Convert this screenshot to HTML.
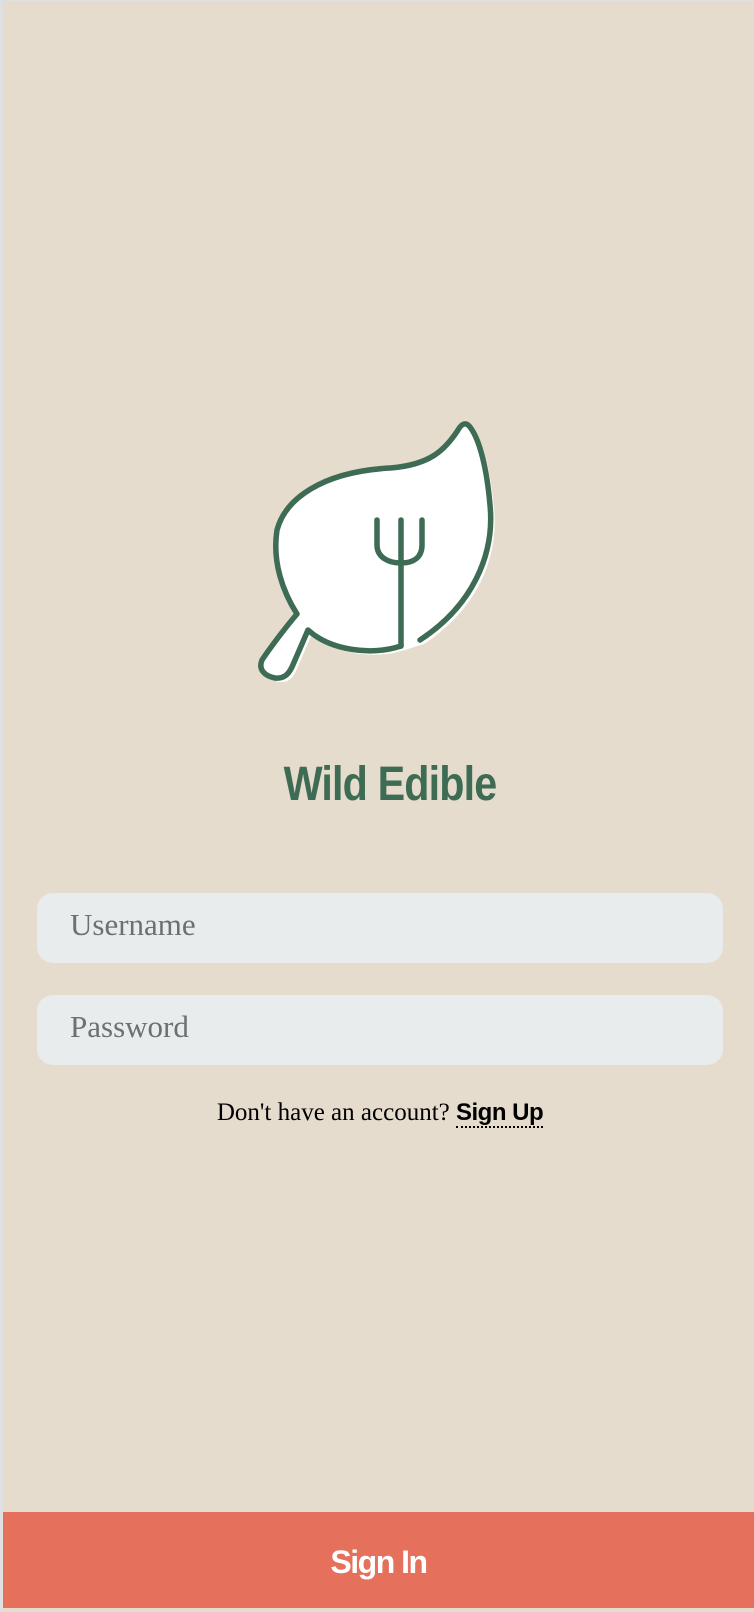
<!DOCTYPE html>
<html><head><meta charset="utf-8"><style>
html,body{margin:0;padding:0;}
body{width:754px;height:1610px;position:relative;overflow:hidden;background:#e5dccd;font-family:"Liberation Serif",serif;}
.lb{position:absolute;left:0;top:0;width:3px;height:1610px;background:#dfe0e2;}
.tb{position:absolute;left:0;top:0;width:754px;height:1px;background:#dfe0e2;}
.title{position:absolute;left:0;width:780px;top:757px;text-align:center;font-family:"Liberation Sans",sans-serif;font-weight:bold;font-size:48px;color:#3d6b53;letter-spacing:-1px;transform:scaleX(0.86);transform-origin:390px 0;}
.inp{position:absolute;left:37px;width:686px;height:70px;border-radius:16px;background:#e9ecec;}
.inp span{position:absolute;left:33px;top:14px;font-size:31px;color:#6c7070;}
.su{position:absolute;left:0;width:760px;top:1099px;text-align:center;font-size:25px;color:#000;}
.su b{font-family:"Liberation Sans",sans-serif;font-size:24px;border-bottom:2px dotted #000;letter-spacing:-0.5px;}
.btn{position:absolute;left:3px;top:1512px;width:751px;height:96px;background:#e5705c;color:#fff;font-family:"Liberation Sans",sans-serif;font-weight:bold;font-size:32px;text-align:center;line-height:100px;letter-spacing:-1.5px;}
</style></head><body>
<div class="tb"></div><div class="lb"></div>
<svg width="754" height="760" style="position:absolute;left:0;top:0">
<g transform="translate(4,4)"><path fill="#fff" d="M420,640 C472,606 495,555 490,505 C487,470 480,440 470,427 C466,422 462,423 458,430 C445,450 430,465 390,468 C320,472 285,500 277,530 C272,562 283,592 297,614 C285,628 270,648 262,660 C258,670 265,676 275,678 C285,679 289,673 292,667 L308,630 C330,650 370,656 401,646 Z"/></g>
<path fill="#fff" stroke="#3d6b53" stroke-width="5.5" stroke-linecap="round" stroke-linejoin="round" d="M420,640 C472,606 495,555 490,505 C487,470 480,440 470,427 C466,422 462,423 458,430 C445,450 430,465 390,468 C320,472 285,500 277,530 C272,562 283,592 297,614 C285,628 270,648 262,660 C258,670 265,676 275,678 C285,679 289,673 292,667 L308,630 C330,650 370,656 401,646"/>
<path fill="none" stroke="#3d6b53" stroke-width="5.5" stroke-linecap="round" stroke-linejoin="round" d="M401,646 L401,520 M377,520 L377,545 C377,557 388,563 401,563 C414,563 422,557 422,545 L422,520"/>
</svg>
<div class="title">Wild Edible</div>
<div class="inp" style="top:893px"><span>Username</span></div>
<div class="inp" style="top:995px"><span>Password</span></div>
<div class="su">Don't have an account? <b>Sign Up</b></div>
<div class="btn">Sign In</div>
</body></html>
